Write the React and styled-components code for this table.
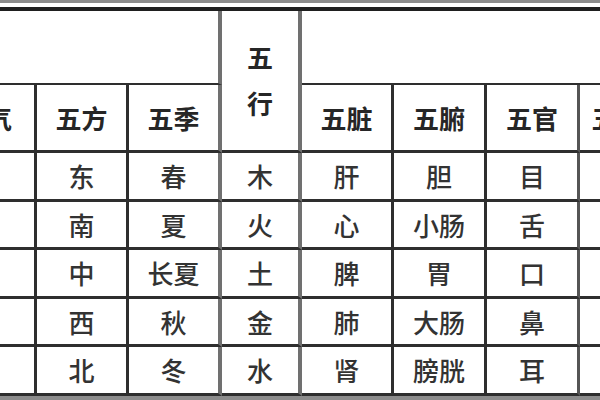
import React from 'react';
import styled, { createGlobalStyle } from 'styled-components';

const GlobalStyle = createGlobalStyle`
    html, body {
        margin: 0;
        padding: 0;
        background: #ffffff;
    }
`;

const DARK = '#2e2e2e';
const GRAY = '#707070';

const COLUMNS = [
    { title: '五气', width: 99, rule: 3, color: DARK },
    { title: '五方', width: 92, rule: 3, color: DARK },
    { title: '五季', width: 93, rule: 4, color: GRAY },
    { title: '五行', width: 80, rule: 4, color: GRAY },
    { title: '五脏', width: 92, rule: 3, color: DARK },
    { title: '五腑', width: 93, rule: 3, color: DARK },
    { title: '五官', width: 93, rule: 3, color: '#555' },
    { title: '五志', width: 78, rule: 3, color: DARK },
];

// the outer columns run off the edges of the picture, their values are out of view
const ROWS = [
    ['', '东', '春', '木', '肝', '胆', '目', ''],
    ['', '南', '夏', '火', '心', '小肠', '舌', ''],
    ['', '中', '长夏', '土', '脾', '胃', '口', ''],
    ['', '西', '秋', '金', '肺', '大肠', '鼻', ''],
    ['', '北', '冬', '水', '肾', '膀胱', '耳', ''],
];

const Page = styled.div`
    width: 600px;
    height: 400px;
    overflow: hidden;
    box-sizing: border-box;
    border-top: 3px solid #8c8c8c;
    padding-top: 4px;
    display: flex;
    flex-direction: column;
    background: #ffffff;
    font-family: "Noto Sans CJK SC", "Noto Sans", sans-serif;
`;

const Table = styled.div`
    display: grid;
    grid-template-columns: ${COLUMNS.map(c => `${c.width}px`).join(' ')};
    grid-template-rows: 74px 68px repeat(5, 48.5px);
    margin-left: -62px;
    width: max-content;
    border-top: 4px solid #1f1f1f;
`;

const Cell = styled.div`
    box-sizing: border-box;
    display: flex;
    align-items: center;
    justify-content: center;
    white-space: nowrap;
    border-right: ${p => p.$rule}px solid ${p => p.$color};
    border-bottom: ${p => p.$bottom || 3}px solid ${DARK};
    font-size: 26px;
    color: #333333;
    font-weight: 500;
`;

const HeadCell = styled(Cell)`
    font-weight: 700;
    color: #262626;
`;

const Merged = styled(Cell)`
    grid-column: ${p => p.$span};
    grid-row: 1;
`;

const ElementHead = styled(HeadCell)`
    grid-column: 4;
    grid-row: 1 / 3;
    flex-direction: column;
    line-height: 46px;
    padding-bottom: 2px;
`;

const Band = styled.div`
    flex: 1;
    background: #8c8c8c;
`;

export default function App () {
    return (
        <>
            <GlobalStyle />
            <Page>
                <Table>
                    <Merged $span="1 / 4" $rule={4} $color={GRAY} $bottom={2} />
                    <ElementHead $rule={4} $color={GRAY}>
                        <span>五</span>
                        <span>行</span>
                    </ElementHead>
                    <Merged $span="5 / 9" $rule={0} $color={DARK} $bottom={2} />
                    {COLUMNS.map((c, i) => (i === 3 ? null : (
                        <HeadCell key={c.title} $rule={c.rule} $color={c.color}
                            style={{ gridColumn: i + 1, gridRow: 2 }}>
                            {c.title}
                        </HeadCell>
                    )))}
                    {ROWS.map((row, r) => row.map((text, i) => (
                        <Cell key={`${r}-${i}`} $rule={COLUMNS[i].rule} $color={COLUMNS[i].color}>
                            {text}
                        </Cell>
                    )))}
                </Table>
                <Band />
            </Page>
        </>
    );
}
